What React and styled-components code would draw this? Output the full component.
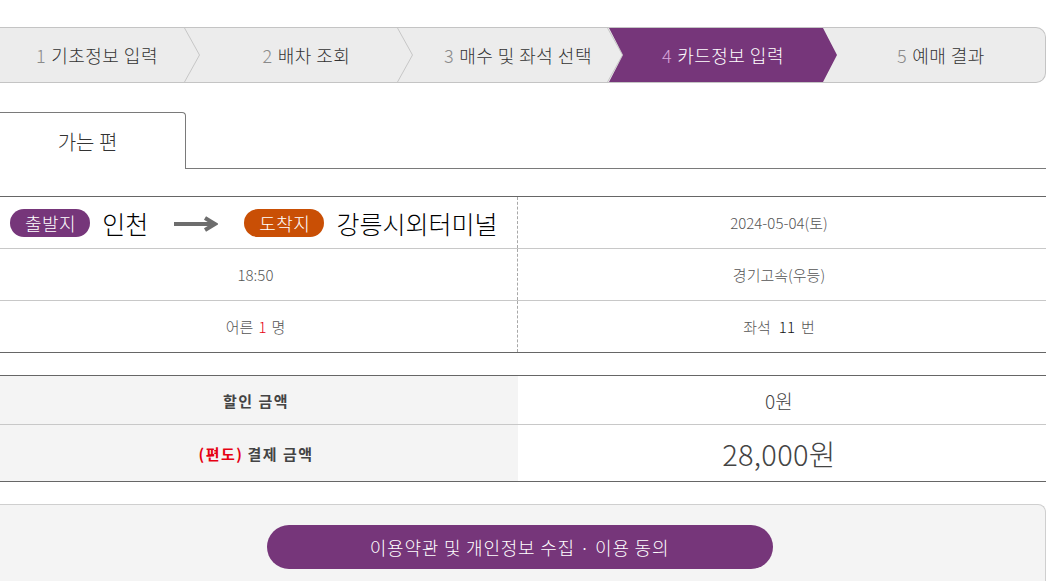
import React from 'react'
import styled, { createGlobalStyle } from 'styled-components'

const GlobalStyle = createGlobalStyle`
  html, body {
    margin: 0;
    padding: 0;
    background: #fff;
    overflow: hidden;
  }
  body {
    font-family: "Noto Sans CJK KR", "Noto Sans", "Liberation Sans", sans-serif;
    font-weight: 300;
    color: #444;
  }
`

const PURPLE = '#76367a'

const Page = styled.div`
  width: 1046px;
  padding-top: 27px;
  display: flex;
  flex-direction: column;
`

const StepBar = styled.div`
  display: flex;
  height: 54px;
  background: #ececec;
  border: 1px solid #c4c4c4;
  border-left: none;
  border-radius: 0 10px 10px 0;
`

const Step = styled.div`
  position: relative;
  display: flex;
  align-items: center;
  justify-content: center;
  box-sizing: border-box;
  flex: ${p => (p.$width ? `0 0 ${p.$width}px` : '1 1 auto')};
  margin-left: ${p => (p.$active ? '-14px' : '0')};
  padding-right: ${p => p.$shift || 0}px;
  font-size: 18px;
  letter-spacing: 0.5px;
  color: ${p => (p.$active ? '#fff' : '#333')};
  background: ${p => (p.$active ? PURPLE : 'transparent')};
  clip-path: ${p =>
    p.$active
      ? 'polygon(0 0, calc(100% - 14px) 0, 100% 50%, calc(100% - 14px) 100%, 0 100%, 14px 50%)'
      : 'none'};
  z-index: ${p => (p.$active ? 2 : 1)};
  white-space: nowrap;
`

const StepNum = styled.span`
  color: ${p => (p.$active ? '#d9a6dc' : '#8a8a8a')};
  margin-right: 5px;
`

const Chevron = styled.svg`
  position: absolute;
  right: 0;
  top: 0;
  width: 16px;
  height: 54px;
`

const TabRow = styled.div`
  display: flex;
  margin-top: 29px;
  height: 57px;
`

const Tab = styled.div`
  flex: 0 0 186px;
  display: flex;
  align-items: center;
  justify-content: center;
  padding-right: 10px;
  border-top: 1px solid #7a7a7a;
  border-right: 1px solid #7a7a7a;
  border-radius: 0 4px 0 0;
  font-size: 20px;
  color: #333;
  box-sizing: border-box;
`

const TabFiller = styled.div`
  flex: 1;
  border-bottom: 1px solid #7a7a7a;
`

const Table = styled.div`
  margin-top: ${p => p.$gap}px;
  border-top: 1px solid #666;
  border-bottom: 1px solid #666;
`

const Row = styled.div`
  display: grid;
  grid-template-columns: 518px 1fr;
  height: ${p => p.$h}px;
  &:not(:last-child) {
    border-bottom: 1px solid #c8c8c8;
  }
`

const Cell = styled.div`
  display: flex;
  align-items: center;
  justify-content: ${p => (p.$start ? 'flex-start' : 'center')};
  padding-left: ${p => (p.$start ? '10px' : '0')};
  padding-right: ${p => (p.$start ? '0' : '6px')};
  font-size: 15px;
  color: #555;
  white-space: nowrap;
  border-right: ${p => (p.$divider ? '1px dashed #a8a8a8' : 'none')};
  background: ${p => (p.$shade ? '#f4f4f4' : 'transparent')};
`

const Badge = styled.span`
  display: inline-flex;
  align-items: center;
  height: 28px;
  padding: 0 14px 0 15px;
  border-radius: 14px;
  background: ${p => p.$color};
  color: #fff;
  font-size: 18px;
  letter-spacing: 0.5px;
`

const Place = styled.span`
  font-size: 25px;
  color: #000;
  margin-left: 12px;
`

const Arrow = styled.svg`
  width: 44px;
  height: 16px;
  margin: 2px 26px 0 26px;
`

const Red = styled.span`
  color: #e60012;
  margin: 0 5px;
`

const Dark = styled.span`
  color: #111;
  margin: 0 6px 0 8px;
`

const Label = styled.span`
  font-size: 15px;
  font-weight: bold;
  letter-spacing: 1.5px;
  color: #444;
`

const OneWay = styled.span`
  color: #e60012;
  margin-right: 4px;
`

const Amount = styled.span`
  font-size: ${p => p.$size}px;
  letter-spacing: 0.3px;
  color: #444;
`

const AgreeBox = styled.div`
  margin-top: 22px;
  background: #f4f4f4;
  border-top: 1px solid #cfcfcf;
  border-right: 1px solid #cfcfcf;
  border-radius: 0 8px 0 0;
  padding: 20px 0 12px;
  display: flex;
  justify-content: center;
  height: 80px;
  box-sizing: border-box;
`

const AgreeButton = styled.button`
  width: 506px;
  height: 44px;
  margin-right: 6px;
  border: none;
  border-radius: 22px;
  background: ${PURPLE};
  color: #fff;
  font-family: inherit;
  font-weight: 300;
  font-size: 18px;
  letter-spacing: 0.8px;
  cursor: pointer;
`

const steps = [
  { n: 1, label: '기초정보 입력', width: 200, shift: 6 },
  { n: 2, label: '배차 조회', width: 213 },
  { n: 3, label: '매수 및 좌석 선택', width: 210 },
  { n: 4, label: '카드정보 입력', width: 228, active: true },
  { n: 5, label: '예매 결과' },
]

const App = () => {
  return (
    <>
      <GlobalStyle />
      <Page>
        <StepBar>
          {steps.map((s, i) => (
            <Step key={s.n} $width={s.width} $active={s.active} $shift={s.shift}>
              <StepNum $active={s.active}>{s.n}</StepNum>
              {s.label}
              {!s.active && i < steps.length - 1 && (
                <Chevron viewBox="0 0 16 54" preserveAspectRatio="none">
                  <polyline points="0.5,0 15.5,27 0.5,54" fill="none" stroke="#c6c6c6" strokeWidth="1" />
                </Chevron>
              )}
            </Step>
          ))}
        </StepBar>

        <TabRow>
          <Tab>가는 편</Tab>
          <TabFiller />
        </TabRow>

        <Table $gap={27}>
          <Row $h={51}>
            <Cell $start $divider>
              <Badge $color={PURPLE}>출발지</Badge>
              <Place>인천</Place>
              <Arrow viewBox="0 0 44 16">
                <line x1="0" y1="8" x2="38" y2="8" stroke="#6d6d6d" strokeWidth="4" />
                <polyline points="31,2 41,8 31,14" fill="none" stroke="#6d6d6d" strokeWidth="4" strokeLinejoin="miter" />
              </Arrow>
              <Badge $color="#c94f05">도착지</Badge>
              <Place>강릉시외터미널</Place>
            </Cell>
            <Cell>2024-05-04(토)</Cell>
          </Row>
          <Row $h={51}>
            <Cell $divider>18:50</Cell>
            <Cell>경기고속(우등)</Cell>
          </Row>
          <Row $h={51}>
            <Cell $divider>
              어른<Red>1</Red>명
            </Cell>
            <Cell>
              좌석<Dark>11</Dark>번
            </Cell>
          </Row>
        </Table>

        <Table $gap={22}>
          <Row $h={48}>
            <Cell $shade>
              <Label>할인 금액</Label>
            </Cell>
            <Cell>
              <Amount $size={19}>0원</Amount>
            </Cell>
          </Row>
          <Row $h={56}>
            <Cell $shade>
              <Label>
                <OneWay>(편도)</OneWay>결제 금액
              </Label>
            </Cell>
            <Cell>
              <Amount $size={29}>28,000원</Amount>
            </Cell>
          </Row>
        </Table>

        <AgreeBox>
          <AgreeButton>이용약관 및 개인정보 수집 · 이용 동의</AgreeButton>
        </AgreeBox>
      </Page>
    </>
  )
}

export default App
